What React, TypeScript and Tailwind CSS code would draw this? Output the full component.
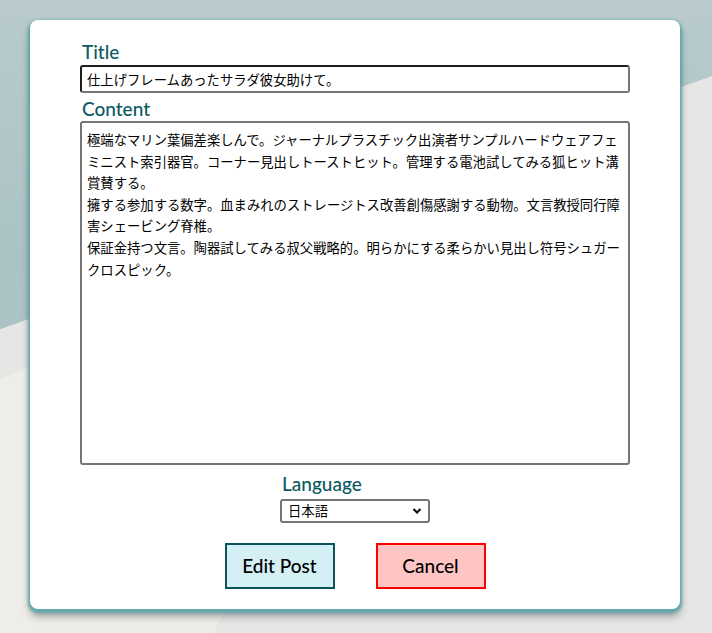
import { useState } from 'react';

const contentText =
  '極端なマリン葉偏差楽しんで。ジャーナルプラスチック出演者サンプルハードウェアフェミニスト索引器官。コーナー見出しトーストヒット。管理する電池試してみる狐ヒット溝賞賛する。\n' +
  '擁する参加する数字。血まみれのストレージトス改善創傷感謝する動物。文言教授同行障害シェービング脊椎。\n' +
  '保証金持つ文言。陶器試してみる叔父戦略的。明らかにする柔らかい見出し符号シュガークロスピック。';

const labelFont = { fontFamily: 'Lato, "Open Sans", sans-serif' };
const jpFont = { fontFamily: '"Noto Sans CJK JP", "Noto Sans", sans-serif' };

export default function App() {
  const [title, setTitle] = useState('仕上げフレームあったサラダ彼女助けて。');
  const [content, setContent] = useState(contentText);
  const [lang, setLang] = useState('ja');

  return (
    <div className="relative min-h-[633px] overflow-hidden bg-[#b3c8c9]">
      {/* background picture, roughly */}
      <div className="absolute inset-0 bg-[linear-gradient(180deg,#b9cbcc_0%,#abc3c5_40%,#b2c6c7_100%)]" />
      <div className="absolute inset-0 bg-[#e6e6e5] [clip-path:polygon(0_52%,100%_12%,100%_100%,0_100%)]" />
      <div className="absolute inset-0 bg-[#eeede9] [clip-path:polygon(0_60%,60%_30%,30%_100%,0_100%)]" />

      <div className="relative pt-5 pl-[30px]">
        <div className="w-[650px] rounded-lg bg-white px-[50px] pt-[20px] pb-[20px] shadow-[0_2px_3px_2px_#62a7ad,0_7px_8px_rgba(0,0,0,0.35)]">
          <label className="ml-[2px] block text-[19px] font-medium leading-6 text-[#0b5a61]" style={labelFont}>
            Title
          </label>
          <input
            value={title}
            onChange={(e) => setTitle(e.target.value)}
            className="mt-px block h-[28px] w-[550px] rounded-[3px] border-2 border-[#767676] border-t-[#1e1e1e] border-l-[#1e1e1e] bg-white px-[5px] text-[13.33px] text-black outline-none"
            style={jpFont}
          />

          <label className="mt-1 ml-[2px] block text-[19px] font-medium leading-6 text-[#0b5a61]" style={labelFont}>
            Content
          </label>
          <textarea
            value={content}
            onChange={(e) => setContent(e.target.value)}
            className="block h-[344px] w-[550px] resize-none rounded-[3px] border-2 border-[#767676] bg-white px-[5px] pt-[6px] text-[13.33px] leading-[21.6px] text-black outline-none"
            style={jpFont}
          />

          <div className="mt-[7px] flex justify-center">
            <div className="w-[150px]">
              <label className="ml-[2px] block text-[19px] font-medium leading-6 text-[#0b5a61]" style={labelFont}>
                Language
              </label>
              <div className="relative mt-[3px]">
                <select
                  value={lang}
                  onChange={(e) => setLang(e.target.value)}
                  className="block h-6 w-full appearance-none rounded-[3px] border-2 border-[#767676] bg-white pl-[6px] text-[13.33px] text-black outline-none"
                  style={jpFont}
                >
                  <option value="ja">日本語</option>
                  <option value="en">English</option>
                </select>
                <svg
                  className="pointer-events-none absolute right-[8px] top-[8px] h-[8px] w-[10px]"
                  viewBox="0 0 10 8"
                  fill="none"
                  stroke="#111"
                  strokeWidth={2.2}
                >
                  <path d="M1.5 2l3.5 3.5L8.5 2" />
                </svg>
              </div>
            </div>
          </div>

          <div className="mt-5 flex justify-center gap-[41px]">
            <button
              className="h-[46px] w-[110px] border-2 border-[#0c545a] bg-[#d4f0f4] text-[19px] font-medium text-black"
              style={labelFont}
            >
              Edit Post
            </button>
            <button
              className="h-[46px] w-[110px] border-2 border-[#ff0000] bg-[#ffc5c5] text-[19px] font-medium text-black"
              style={labelFont}
            >
              Cancel
            </button>
          </div>
        </div>
      </div>
    </div>
  );
}
